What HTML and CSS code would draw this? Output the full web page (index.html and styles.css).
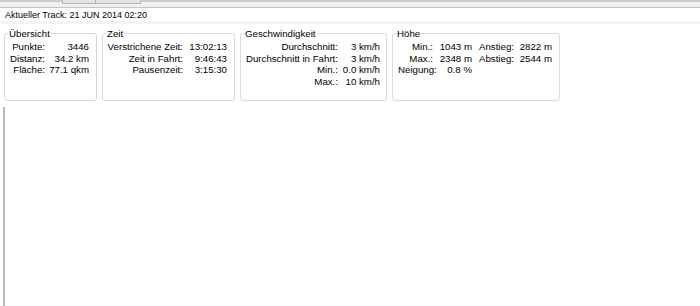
FILE: index.html
```html
<!DOCTYPE html>
<html lang="de">
<head>
    <meta charset="UTF-8">
    <title>Track Statistik</title>
    <link rel="stylesheet" href="styles.css">
</head>
<body>
    <div class="tabstrip">
        <span class="tab tab-a"></span>
        <span class="tab tab-b"></span>
    </div>
    <div class="trackbar">Aktueller Track: 21 JUN 2014 02:20</div>

    <div class="stats">
        <fieldset class="group group-overview">
            <legend>Übersicht</legend>
            <div class="grid">
                <span>Punkte:</span><span>3446</span>
                <span>Distanz:</span><span>34.2 km</span>
                <span>Fläche:</span><span>77.1 qkm</span>
            </div>
        </fieldset>
        <fieldset class="group group-time">
            <legend>Zeit</legend>
            <div class="grid">
                <span>Verstrichene Zeit:</span><span>13:02:13</span>
                <span>Zeit in Fahrt:</span><span>9:46:43</span>
                <span>Pausenzeit:</span><span>3:15:30</span>
            </div>
        </fieldset>
        <fieldset class="group group-speed">
            <legend>Geschwindigkeit</legend>
            <div class="grid">
                <span>Durchschnitt:</span><span>3 km/h</span>
                <span>Durchschnitt in Fahrt:</span><span>3 km/h</span>
                <span>Min.:</span><span>0.0 km/h</span>
                <span>Max.:</span><span>10 km/h</span>
            </div>
        </fieldset>
        <fieldset class="group group-height">
            <legend>Höhe</legend>
            <div class="grid">
                <span>Min.:</span><span>1043 m</span><span>Anstieg:</span><span>2822 m</span>
                <span>Max.:</span><span>2348 m</span><span>Abstieg:</span><span>2544 m</span>
                <span class="left">Neigung:</span><span>0.8 %</span>
            </div>
        </fieldset>
    </div>

    <div class="chart"></div>
</body>
</html>
```

FILE: styles.css
```css
body {
    margin: 0;
    background: #ffffff;
    font-family: 'Liberation Sans', Arial, sans-serif;
    color: #000;
    height: 306px;
    overflow: hidden;
}
.tabstrip {
    box-sizing: border-box;
    height: 8px;
    background: #f0f0f0;
    border-top: 2px solid #cdcdcd;
    border-bottom: 1px solid #c4c4c4;
    display: flex;
    padding-left: 62px;
}
.tab {
    height: 3px;
    margin-top: -2px;
    background: #e4e4e4;
    border: 1px solid #b8b8b8;
    border-top: none;
}
.tab-a {
    width: 32px;
}
.tab-b {
    width: 44px;
    border-left: none;
}
.trackbar {
    height: 13px;
    line-height: 14px;
    padding-left: 5px;
    font-size: 9px;
    border-bottom: 3px solid #f4f4f4;
}
.stats {
    display: flex;
    gap: 5px;
    padding: 4px 0 0 4px;
}
.group {
    margin: 0;
    padding: 0;
    box-sizing: border-box;
    height: 73px;
    border: 1px solid #d9d9d9;
    border-radius: 3px;
    font-size: 9.7px;
}
.group legend {
    margin-left: 3px;
    padding: 0 1px;
    line-height: 11px;
}
.grid {
    display: grid;
    grid-auto-rows: 11.7px;
    line-height: 11.7px;
    padding-top: 2px;
    white-space: nowrap;
}
.grid span {
    text-align: right;
}
.grid .left {
    text-align: left;
    padding-left: 5px;
}
.group-overview {
    width: 93px;
}
.group-overview .grid {
    grid-template-columns: 40px 44px;
}
.group-time {
    width: 133px;
}
.group-time .grid {
    grid-template-columns: 80px 44px;
}
.group-speed {
    width: 147px;
}
.group-speed .grid {
    grid-template-columns: 97px 42px;
}
.group-height {
    width: 168px;
}
.group-height .grid {
    grid-template-columns: 40px 39px 42px 38px;
}
.chart {
    margin: 6px 0 0 3px;
    height: 200px;
    border-left: 2px solid #b9b9b9;
}
```
